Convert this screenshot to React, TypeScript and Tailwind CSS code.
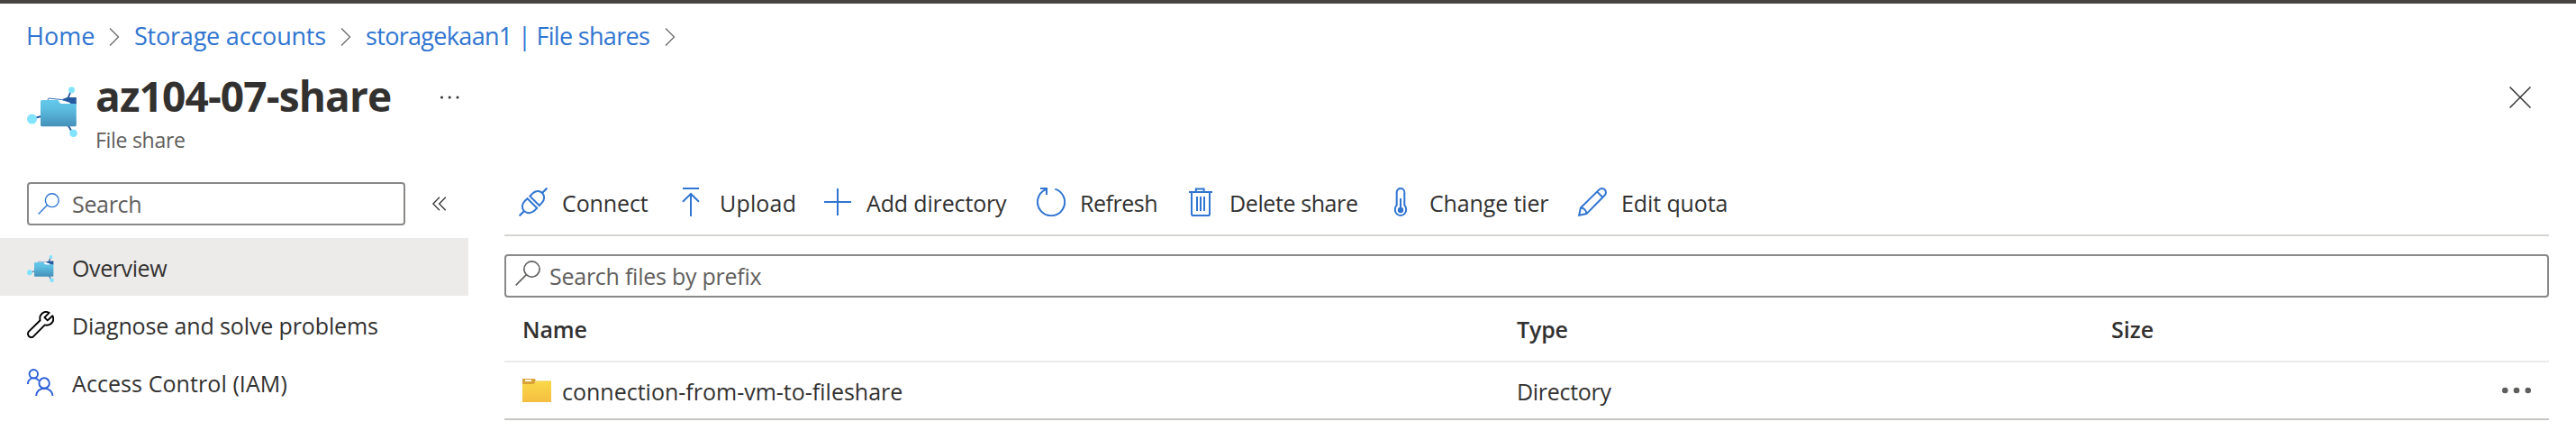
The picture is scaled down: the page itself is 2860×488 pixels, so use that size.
import React from "react";

type IconProps = { className?: string };

const BLUE = "#3075d1";

function Chevron() {
  return (
    <svg className="h-5 w-3 shrink-0" viewBox="0 0 12 20" fill="none" stroke="#6b6a69" strokeWidth="1.3">
      <path d="M1 0.5L10.5 10L1 19.5" />
    </svg>
  );
}

function FileShareIcon({ className }: IconProps) {
  return (
    <svg className={className} viewBox="0 0 56 56">
      <defs>
        <linearGradient id="share-front" x1="0" y1="0" x2="0" y2="1">
          <stop offset="0" stopColor="#63c9ea" />
          <stop offset="0.3" stopColor="#5dbfe2" />
          <stop offset="1" stopColor="#4490b9" />
        </linearGradient>
      </defs>
      <path d="M49 4L45.5 13M6 35.5L16 33M45.5 43L51 52" stroke="#265a9f" strokeWidth="1.9" />
      <path d="M38 14.5L44.5 12H54.8V20H38Z" fill="#265a9f" />
      <path d="M22 17L24 13L38.5 14.6L46 17.2L49 19V22H22Z" fill="#fff" stroke="#2f6cb5" strokeWidth="1" />
      <path d="M15 17C15 15.8 15.6 15 17 15H33.5C35 15 35.4 15.8 36 17C36.6 18.3 37.2 19 38.8 19H54.8V42C54.8 43.5 54.2 44.3 53 44.3H16.8C15.6 44.3 15 43.4 15 42Z" fill="url(#share-front)" />
      <path d="M34.5 14.8C36 14.8 38.5 15.6 41 16L46.5 17.6L48.5 19H39C37 19 36.6 18 36 17Z" fill="#fff" />
      <circle cx="49.5" cy="3.7" r="3.5" fill="#81e3fd" />
      <circle cx="5.5" cy="36" r="5.5" fill="#81e3fd" />
      <circle cx="51.5" cy="51.8" r="4.3" fill="#81e3fd" />
    </svg>
  );
}

function SearchIcon({ className }: IconProps) {
  return (
    <svg className={className} viewBox="0 0 24 24" fill="none" stroke="currentColor" strokeWidth="1.4">
      <circle cx="15.8" cy="8.2" r="7.4" />
      <path d="M10.4 13.6L0.6 23.4" />
    </svg>
  );
}

function CollapseIcon() {
  return (
    <svg className="h-4 w-4 shrink-0" viewBox="0 0 16 16" fill="none" stroke="#3b3a39" strokeWidth="1.4">
      <path d="M8 0.8L0.9 8L8 15.2M14.8 0.8L7.7 8L14.8 15.2" />
    </svg>
  );
}

function WrenchIcon({ className }: IconProps) {
  return (
    <svg className={className} viewBox="0 0 30 30" fill="none" stroke="#000" strokeWidth="1.9" strokeLinejoin="round">
      <path d="M24.6 1.9C22.2 0.6 18.8 0.7 16.6 2.8C14.5 4.8 13.9 7.5 14.6 10.2L2 22.6C0.6 24.1 0.6 26.6 2.1 28C3.6 29.4 5.9 29.4 7.4 27.9L19.8 15.4C22.5 16.1 25.3 15.4 27.2 13.5C29.3 11.4 29.6 7.8 28.3 5.2L22.8 10.4L19.4 7.1Z" />
    </svg>
  );
}

function PeopleIcon({ className }: IconProps) {
  return (
    <svg className={className} viewBox="0 0 30 30" fill="none" stroke="#2a5fd8" strokeWidth="1.9">
      <circle cx="7.3" cy="5.7" r="4.7" />
      <path d="M0.9 17V16.4C0.9 12.9 3.8 10.4 7.3 10.4C9.7 10.4 11.8 11.5 13 13.3" />
      <circle cx="19.1" cy="16" r="5.7" />
      <path d="M10.1 30C10.3 25.2 14.2 21.7 19.2 21.7C24.2 21.7 28.2 25.2 28.6 30" />
    </svg>
  );
}

function ToolIcon({ children }: { children: React.ReactNode }) {
  return (
    <svg className="mr-4 h-8 w-8 shrink-0" viewBox="0 0 32 32" fill="none" stroke={BLUE} strokeWidth="2">
      {children}
    </svg>
  );
}

const tools = [
  {
    label: "Connect",
    box: "w-[175px]",
    text: "tracking-[-0.12px]",
    icon: (
      <>
        <path d="M0.6 31.4L6 26M26 6L31.4 0.6" strokeWidth="2.2" />
        <path d="M9.6 12.2L20.2 22.8L17.4 25.6C14 28.8 9 29 6 26.1C3 23.1 3.2 18.2 6.6 15Z" />
        <path d="M12.4 9.6L22.8 20L25.6 16.9C28.9 13.6 28.9 8.9 26 6C23 3.1 18.4 3.2 15.2 6.6Z" />
      </>
    ),
  },
  {
    label: "Upload",
    box: "w-[163px]",
    text: "tracking-[0.18px]",
    icon: <path d="M7 1H25M16 32V7.5M7 15.8L16 7L25 15.8" />,
  },
  {
    label: "Add directory",
    box: "w-[237px]",
    text: "tracking-[-0.15px]",
    icon: <path d="M1 16H31M16 1V31" />,
  },
  {
    label: "Refresh",
    box: "w-[166px]",
    text: "tracking-[-0.48px]",
    icon: (
      <>
        <path d="M20.3 1.6A15.1 15.1 0 1 1 10.3 2.1" />
        <path d="M4 1H11V8" />
      </>
    ),
  },
  {
    label: "Delete share",
    box: "w-[222px]",
    text: "tracking-[-0.4px]",
    icon: (
      <>
        <path d="M3 5H29M10.8 5V1.6H19.6V5" />
        <path d="M6 5V29.2C6 30.4 6.6 31 7.8 31H24.4C25.6 31 26 30.4 26 29.2V5" />
        <path d="M12 10V26M16 10V26M20 10V26" />
      </>
    ),
  },
  {
    label: "Change tier",
    box: "w-[213px]",
    text: "tracking-[-0.13px]",
    icon: (
      <>
        <path d="M11.7 19.6V5.2C11.7 2.7 13.6 1 16 1C18.4 1 20.3 2.7 20.3 5.2V19.6C21.6 20.8 22.2 22.6 22.2 24.6C22.2 28.2 19.5 31 16 31C12.5 31 9.8 28.2 9.8 24.6C9.8 22.6 10.4 20.8 11.7 19.6Z" />
        <path d="M16 12V24" />
        <circle cx="16" cy="25" r="3.2" fill={BLUE} stroke="none" />
      </>
    ),
  },
  {
    label: "Edit quota",
    box: "w-[180px]",
    text: "tracking-[-0.1px]",
    icon: (
      <path d="M1.2 30.8L2.9 22.6L23.4 2.4C25.3 0.6 28 0.7 29.6 2.3C31.3 3.9 31.4 6.7 29.6 8.6L9.4 29.1ZM2.9 22.6C6.3 22.4 9.4 25.4 9.4 29.1M21.2 4.6L27.3 10.8" />
    ),
  },
];

function Folder() {
  return (
    <svg className="mr-3 h-[26px] w-8 shrink-0" viewBox="0 0 32 26">
      <defs>
        <linearGradient id="folder-front" x1="0" y1="0" x2="0" y2="1">
          <stop offset="0" stopColor="#f9d848" />
          <stop offset="1" stopColor="#f5be41" />
        </linearGradient>
      </defs>
      <path d="M0 0H13.5L16.2 2.7L12.5 7H0Z" fill="#d9a337" />
      <path d="M14 2H32V4H14Z" fill="#f7e08f" />
      <path d="M0 6H12.3L16.2 3H32V26H0Z" fill="url(#folder-front)" />
      <path d="M3 1.2H10V3H3Z" fill="#fff" />
    </svg>
  );
}

export default function App() {
  return (
    <div className="flex h-[488px] w-[2860px] flex-col overflow-hidden bg-white font-['Open_Sans','Noto_Sans',sans-serif] text-[25px] leading-10 whitespace-nowrap text-[#323130]">
      <div className="h-1 shrink-0 bg-[#474645]" />

      <nav className="flex h-[74px] shrink-0 items-center pl-[29px] text-[27px] text-[#3075d1]">
        <a className="-mt-0.5 w-[92px]">Home</a>
        <Chevron />
        <a className="-mt-0.5 ml-4 w-[229px] tracking-[-0.21px]">Storage accounts</a>
        <Chevron />
        <a className="-mt-0.5 ml-4 w-[332px] tracking-[-0.68px]">storagekaan1 | File shares</a>
        <Chevron />
      </nav>

      <header className="flex h-[124px] shrink-0 pl-[30px]">
        <FileShareIcon className="mt-[18px] h-14 w-14 shrink-0" />
        <div className="ml-5 w-[382px]">
          <h1 className="pt-1 text-[46px] leading-[48px] font-bold tracking-[-0.85px]">az104-07-share</h1>
          <p className="mt-[7px] text-[23px] leading-9 tracking-[-0.29px] text-[#605e5c]">File share</p>
        </div>
        <svg className="mt-[28px] h-1 w-6" viewBox="0 0 24 4" fill="#323130">
          <circle cx="2.5" cy="2" r="1.5" />
          <circle cx="11.2" cy="2" r="1.5" />
          <circle cx="20" cy="2" r="1.5" />
        </svg>
        <svg className="mt-[18px] mr-[50px] ml-auto h-6 w-6" viewBox="0 0 24 24" stroke="#323130" strokeWidth="1.5">
          <path d="M0.5 0.5L23.5 23.5M23.5 0.5L0.5 23.5" />
        </svg>
      </header>

      <div className="flex flex-1">
        <aside className="w-[560px] shrink-0">
          <div className="flex items-center pl-[30px]">
            <div className="flex h-12 w-[420px] items-center rounded-[4px] border-2 border-[#8a8886] pl-[10px]">
              <SearchIcon className="h-6 w-6 shrink-0 text-[#3075d1]" />
              <span className="ml-[14px] tracking-[-0.32px] text-[#605e5c]">Search</span>
            </div>
            <div className="ml-[30px]">
              <CollapseIcon />
            </div>
          </div>
          <ul className="mt-[14px] w-[520px]">
            <li className="flex h-16 items-center bg-[#edebe9] pl-[30px]">
              <FileShareIcon className="mt-1 h-[30px] w-[30px]" />
              <span className="mt-0.5 ml-5 tracking-[-0.4px]">Overview</span>
            </li>
            <li className="flex h-16 items-center pl-[30px]">
              <WrenchIcon className="h-[30px] w-[30px]" />
              <span className="mt-0.5 ml-5 tracking-[-0.13px]">Diagnose and solve problems</span>
            </li>
            <li className="flex h-16 items-center pl-[30px]">
              <PeopleIcon className="h-[30px] w-[30px]" />
              <span className="mt-0.5 ml-5 tracking-[0.08px]">Access Control (IAM)</span>
            </li>
          </ul>
        </aside>

        <main className="w-[2270px]">
          <div className="flex h-[60px] items-start border-b-2 border-[#d6d5d4] pl-4">
            {tools.map((t) => (
              <div key={t.label} className={`flex shrink-0 items-center pt-px ${t.box}`}>
                <ToolIcon>{t.icon}</ToolIcon>
                <span className={`mt-0.5 ${t.text}`}>{t.label}</span>
              </div>
            ))}
          </div>
          <div className="mt-5 flex h-12 items-center rounded-[4px] border-2 border-[#8a8886] pl-[10px]">
            <SearchIcon className="-mt-1.5 h-7 w-7 shrink-0 text-[#605e5c]" />
            <span className="-mt-px ml-[10px] tracking-[-0.25px] text-[#605e5c]">Search files by prefix</span>
          </div>
          <div className="flex h-[72px] items-center border-b-2 border-[#edebe9] pl-5 font-semibold">
            <span className="w-[1104px] tracking-[-0.17px]">Name</span>
            <span className="w-[660px] tracking-[-0.17px]">Type</span>
            <span>Size</span>
          </div>
          <div className="flex h-16 items-center border-b-2 border-[#c8c6c4] pr-5 pl-5">
            <div className="flex w-[1104px] items-center">
              <Folder />
              <span className="mt-0.5">connection-from-vm-to-fileshare</span>
            </div>
            <span className="mt-0.5 tracking-[-0.29px]">Directory</span>
            <svg className="ml-auto h-2 w-8" viewBox="0 0 32 8" fill="#605e5c">
              <circle cx="3.2" cy="4" r="3.3" />
              <circle cx="16" cy="4" r="3.3" />
              <circle cx="28.8" cy="4" r="3.3" />
            </svg>
          </div>
        </main>
      </div>
    </div>
  );
}
